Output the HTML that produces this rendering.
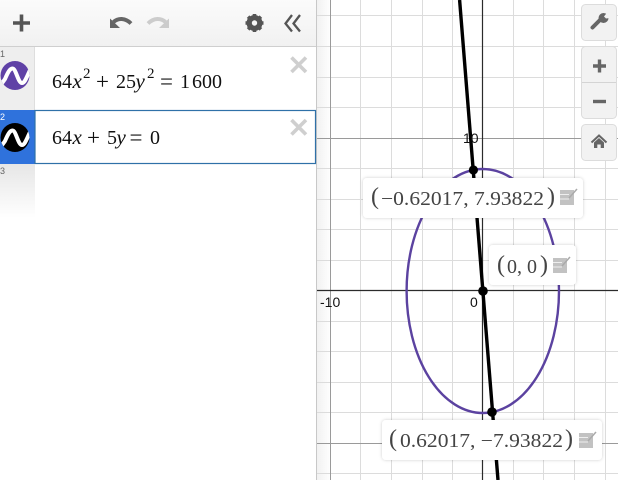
<!DOCTYPE html>
<html><head><meta charset="utf-8"><style>
html,body{margin:0;padding:0;background:#fff}
svg{display:block;position:absolute;left:0;top:0}
text{font-family:"Liberation Serif",serif;fill:#111}
.s{font-family:"Liberation Sans",sans-serif}
.i{font-style:italic}
</style></head><body>
<svg width="618" height="480" viewBox="0 0 618 480" xmlns="http://www.w3.org/2000/svg">
<defs>
<linearGradient id="sh" x1="0" x2="1" y1="0" y2="0"><stop offset="0" stop-color="#e6e6e6"/><stop offset="1" stop-color="#fff"/></linearGradient>
<linearGradient id="fade" x1="0" x2="0" y1="0" y2="1"><stop offset="0" stop-color="#e6e6e6"/><stop offset="1" stop-color="#fff"/></linearGradient>
<linearGradient id="hd" x1="0" x2="0" y1="0" y2="1"><stop offset="0" stop-color="#fbfbfb"/><stop offset="1" stop-color="#f1f1f1"/></linearGradient>
<filter id="f" x="-10%" y="-20%" width="120%" height="140%"><feDropShadow dx="0" dy="0" stdDeviation="1.5" flood-color="#000" flood-opacity=".2"/></filter>
<clipPath id="c1"><circle cx="15" cy="75.500" r="14.500"/></clipPath>
<clipPath id="c2"><circle cx="15" cy="137.500" r="14.500"/></clipPath>
<g id="tick"><rect x="0" y="2" width="14" height="15" fill="#c2c2c2"/><path d="M0 6.500h9M0 11h9" stroke="#eee" stroke-width="1"/><path d="M9 10 L17 1" stroke="#aaa" stroke-width="1.500"/></g>
</defs>
<rect width="618" height="480" fill="#fff"/>
<rect x="317" y="0" width="14" height="480" fill="url(#sh)" opacity=".55"/>
<!-- minor grid -->
<g stroke="#dcdcdc" stroke-width="1">
<path d="M360.500 0V480M391.500 0V480M422.500 0V480M452.500 0V480M513.500 0V480M543.500 0V480M574.500 0V480M605.500 0V480"/>
<path d="M317 15.500H618M317 46.500H618M317 77.500H618M317 107.500H618M317 168.500H618M317 199.500H618M317 229.500H618M317 260.500H618M317 321.500H618M317 351.500H618M317 382.500H618M317 412.500H618M317 473.500H618"/>
</g>
<!-- major grid -->
<g stroke="#9a9a9a" stroke-width="1">
<path d="M330.500 0V480M317 138.500H618M317 443.500H618"/>
</g>
<!-- axes -->
<path d="M482.500 0V480M317 290.500H618" stroke="#2b2b2b" stroke-width="1.200"/>
<!-- ellipse -->
<ellipse cx="482.800" cy="291" rx="76.200" ry="122" fill="none" stroke="#5b42a0" stroke-width="2.400"/>
<!-- line -->
<path d="M459.600 0L498 480" stroke="#000" stroke-width="3.400" fill="none"/>
<circle cx="473.400" cy="170" r="4.600" fill="#000"/>
<circle cx="483" cy="291" r="4.800" fill="#000"/>
<circle cx="492" cy="412" r="4.800" fill="#000"/>
<!-- labels -->
<text x="463" y="143" class="s" font-size="14" fill="#222">10</text>
<text x="320" y="307" class="s" font-size="14" fill="#222">-10</text>
<text x="470" y="307" class="s" font-size="14" fill="#222">0</text>
<!-- tooltips -->
<g filter="url(#f)" fill="#fff">
<rect x="363" y="178" width="220" height="40" rx="4"/>
<rect x="489" y="245" width="87" height="40" rx="4"/>
<rect x="382" y="420" width="220" height="40" rx="4"/>
</g>
<g>
<text x="371" y="204" font-size="24" style="fill:#444">(</text>
<text x="381" y="205" font-size="19.500" style="fill:#444" textLength="163" lengthAdjust="spacingAndGlyphs">−0.62017, 7.93822</text>
<text x="547" y="204" font-size="24" style="fill:#444">)</text>
<text x="497" y="272" font-size="24" style="fill:#444">(</text>
<text x="507" y="273" font-size="19.500" style="fill:#444" textLength="30" lengthAdjust="spacingAndGlyphs">0, 0</text>
<text x="540" y="272" font-size="24" style="fill:#444">)</text>
<text x="389" y="446" font-size="24" style="fill:#444">(</text>
<text x="400" y="447" font-size="19.500" style="fill:#444" textLength="163" lengthAdjust="spacingAndGlyphs">0.62017, −7.93822</text>
<text x="565" y="446" font-size="24" style="fill:#444">)</text>
</g>
<use href="#tick" x="560" y="188"/>
<use href="#tick" x="553" y="256"/>
<use href="#tick" x="579" y="431"/>
<!-- right buttons -->
<g fill="#f2f2f2" stroke="#dcdcdc">
<rect x="581.500" y="4.500" width="35" height="36" rx="4"/>
<rect x="581.500" y="46.500" width="35" height="72" rx="4"/>
<rect x="581.500" y="124.500" width="35" height="36" rx="4"/>
</g>
<path d="M582 82.500H616" stroke="#d4d4d4"/>
<path d="M592.500 27.500L601 19" stroke="#666" stroke-width="4" stroke-linecap="round"/>
<circle cx="603.500" cy="18" r="5" fill="#666"/>
<path d="M606 18.500L604 16.500L607.500 12L611 13.500L610 18z" fill="#f2f2f2"/>
<path d="M593 66H606M599.500 59.500V72.500" stroke="#666" stroke-width="3.400"/>
<path d="M593 101.500H606" stroke="#666" stroke-width="3.400"/>
<path d="M591.500 142.500L599 135.500L606.500 142.500" fill="none" stroke="#666" stroke-width="2"/>
<path d="M594 142.500L599 138L604 142.500V148H600.700V144.500H597.300V148H594z" fill="#666"/>
<!-- left panel -->
<rect x="0" y="0" width="316" height="480" fill="#fff"/>
<rect x="316" y="0" width="1" height="480" fill="#c8c8c8"/>
<rect x="0" y="0" width="316" height="46" fill="url(#hd)"/>
<path d="M0 46.500H316" stroke="#cfcfcf"/>
<!-- add -->
<path d="M13 23H30M21.500 14.500V31.500" stroke="#555" stroke-width="3.600"/>
<!-- undo -->
<path d="M131 23.500C125 17.500 118 18 113.500 22" fill="none" stroke="#666" stroke-width="4"/>
<path d="M110 18.500V28H120z" fill="#666"/>
<!-- redo -->
<path d="M148 23.500C154 17.500 161 18 165.500 22" fill="none" stroke="#ccc" stroke-width="4"/>
<path d="M169 18.500V28H159z" fill="#ccc"/>
<!-- gear -->
<circle cx="254.500" cy="23" r="5.500" fill="none" stroke="#555" stroke-width="5"/>
<g stroke="#555" stroke-width="3.600">
<path d="M254.500 14V32M245.500 23H263.500M248.100 16.600L260.900 29.400M260.900 16.600L248.100 29.400"/>
</g>
<circle cx="254.500" cy="23" r="2.700" fill="#f7f7f7"/>
<!-- collapse -->
<path d="M292 15L285.500 23.500L292 31.500M300 15L293.500 23.500L300 31.500" fill="none" stroke="#555" stroke-width="2.300"/>
<!-- rows -->
<rect x="0" y="47" width="35" height="63" fill="#eeeeee"/>
<path d="M34.500 47V110" stroke="#dedede"/>
<rect x="0" y="110" width="35" height="54" fill="#2f72dc"/>
<rect x="35" y="110.500" width="280.500" height="53" fill="#fff" stroke="#2f71a8" stroke-width="1.200"/>
<rect x="0" y="164" width="35" height="54" fill="url(#fade)"/>
<text x="0" y="57" class="s" font-size="9" style="fill:#666">1</text>
<text x="0" y="120" class="s" font-size="9" style="fill:#fff">2</text>
<text x="0" y="174" class="s" font-size="9" style="fill:#666">3</text>
<circle cx="15" cy="75.500" r="14.500" fill="#5f41a6"/>
<path clip-path="url(#c1)" d="M0 86L5 79C8 72 10 68.500 12.500 68.500C16 68.500 18 83 22 83C25 83 27 76 31 68" fill="none" stroke="#fff" stroke-width="4"/>
<circle cx="15" cy="137.500" r="14.500" fill="#000"/>
<path clip-path="url(#c2)" d="M0 148L5 141C8 134 10 130.500 12.500 130.500C16 130.500 18 145 22 145C25 145 27 138 31 130" fill="none" stroke="#fff" stroke-width="4"/>
<!-- close -->
<path d="M291.500 57.500L306 72M306 57.500L291.500 72" stroke="#cfcfcf" stroke-width="3.600"/>
<path d="M291.500 120L306 134.500M306 120L291.500 134.500" stroke="#cfcfcf" stroke-width="3.600"/>
<!-- equations -->
<g font-size="20">
<text x="52" y="88">64</text><text x="72.500" y="88" class="i" font-size="21">x</text>
<text x="83" y="78" font-size="15">2</text>
<text x="96" y="89" font-size="23">+</text>
<text x="116" y="88">25</text><text x="135.500" y="88" class="i" font-size="21">y</text>
<text x="147" y="78" font-size="15">2</text>
<text x="160" y="89" font-size="23">=</text>
<text x="180" y="88">1</text><text x="192" y="88">600</text>
<text x="52" y="144">64</text><text x="72.500" y="144" class="i" font-size="21">x</text>
<text x="87" y="145" font-size="23">+</text>
<text x="107" y="144">5</text><text x="116.500" y="144" class="i" font-size="21">y</text>
<text x="129.500" y="145" font-size="23">=</text>
<text x="150" y="144">0</text>
</g>
</svg>
</body></html>
